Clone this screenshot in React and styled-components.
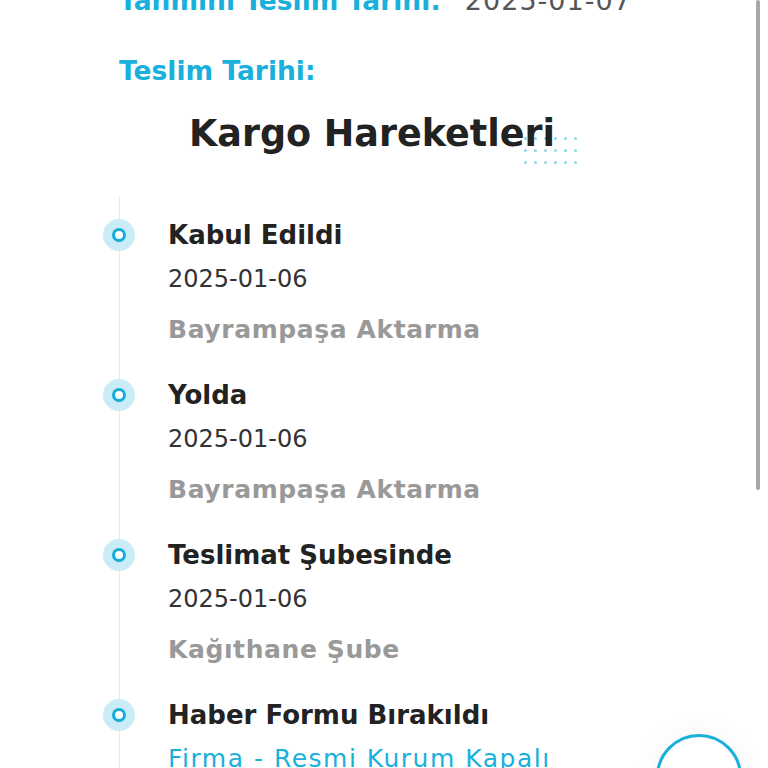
import React from "react";
import styled, { createGlobalStyle } from "styled-components";

const Global = createGlobalStyle`
  html, body {
    margin: 0;
    padding: 0;
    background: #fff;
    overflow: hidden;
  }
  body {
    font-family: "DejaVu Sans", "Noto Sans", sans-serif;
  }
`;

const events = [
  { title: "Kabul Edildi", date: "2025-01-06", place: "Bayrampaşa Aktarma" },
  { title: "Yolda", date: "2025-01-06", place: "Bayrampaşa Aktarma" },
  { title: "Teslimat Şubesinde", date: "2025-01-06", place: "Kağıthane Şube" },
  { title: "Haber Formu Bırakıldı", note: "Firma - Resmi Kurum Kapalı" },
];

function App() {
  return (
    <Page>
      <Global />
      <Info>
        <InfoRow>
          <Label>Tahmini Teslim Tarihi:</Label>
          <Value>2025-01-07</Value>
        </InfoRow>
        <InfoRow>
          <Label>Teslim Tarihi:</Label>
        </InfoRow>
      </Info>
      <TitleWrap>
        <Title>Kargo Hareketleri</Title>
        <Dots>
          {Array.from({ length: 18 }).map((_, i) => (
            <span key={i} />
          ))}
        </Dots>
      </TitleWrap>
      <Timeline>
        {events.map((e, i) => (
          <Item key={i}>
            <Marker>
              <Ring />
            </Marker>
            <Body>
              <ItemTitle>{e.title}</ItemTitle>
              {e.date && <ItemDate>{e.date}</ItemDate>}
              {e.place && <ItemPlace>{e.place}</ItemPlace>}
              {e.note && <ItemNote>{e.note}</ItemNote>}
            </Body>
          </Item>
        ))}
      </Timeline>
      <ScrollBar />
      <FloatButton>
        <svg width="30" height="30" viewBox="0 0 24 24" fill="none" stroke="#666" strokeWidth="2" strokeLinecap="round" strokeLinejoin="round">
          <path d="M9 6l6 6-6 6" />
        </svg>
      </FloatButton>
    </Page>
  );
}

export default App;

const Page = styled.div`
  position: relative;
  width: 768px;
  height: 768px;
  overflow: hidden;
  background: #fff;
`;

const Info = styled.div`
  display: flex;
  flex-direction: column;
  gap: 30px;
  padding-left: 119px;
  margin-top: -19px;
`;

const InfoRow = styled.div`
  display: flex;
  align-items: baseline;
  gap: 24px;
  height: 40px;
  line-height: 40px;
`;

const Label = styled.span`
  color: #19b0dc;
  font-size: 26.5px;
  font-weight: 700;
`;

const Value = styled.span`
  color: #555;
  font-size: 27px;
  font-weight: 400;
  letter-spacing: 1px;
`;

const TitleWrap = styled.div`
  position: relative;
  width: max-content;
  margin: 20px auto 0;
  padding-right: 24px;
`;

const Title = styled.h2`
  position: relative;
  z-index: 1;
  margin: 0;
  color: #222;
  font-size: 36.5px;
  font-weight: 700;
  line-height: 46px;
`;

const Dots = styled.div`
  position: absolute;
  right: 2px;
  top: 26px;
  display: grid;
  grid-template-columns: repeat(6, 3px);
  gap: 9px 7px;
  span {
    width: 3px;
    height: 3px;
    border-radius: 50%;
    background: #8fd6ea;
  }
`;

const Timeline = styled.div`
  position: relative;
  margin: 54px 0 0 103px;
  padding-top: 4px;
  &::before {
    content: "";
    position: absolute;
    left: 16px;
    top: -14px;
    bottom: -200px;
    width: 1px;
    background: #e8e8e8;
  }
`;

const Item = styled.div`
  display: flex;
  gap: 33px;
  height: 160px;
`;

const Marker = styled.div`
  position: relative;
  z-index: 1;
  flex: none;
  width: 32px;
  height: 32px;
  margin-top: 4px;
  border-radius: 50%;
  background: #c9ecf7;
  display: flex;
  align-items: center;
  justify-content: center;
`;

const Ring = styled.div`
  width: 8px;
  height: 8px;
  border-radius: 50%;
  border: 3px solid #14addb;
  background: #fff;
`;

const Body = styled.div`
  display: flex;
  flex-direction: column;
`;

const ItemTitle = styled.div`
  color: #222;
  font-size: 26px;
  font-weight: 700;
  line-height: 40px;
`;

const ItemDate = styled.div`
  color: #333;
  font-size: 24px;
  font-weight: 400;
  line-height: 48px;
`;

const ItemPlace = styled.div`
  color: #999;
  font-size: 25px;
  font-weight: 700;
  line-height: 54px;
  letter-spacing: 0.6px;
`;

const ItemNote = styled.div`
  color: #19b0dc;
  font-size: 25px;
  font-weight: 400;
  line-height: 48px;
  letter-spacing: 1.5px;
`;

const ScrollBar = styled.div`
  position: absolute;
  right: 8px;
  top: 0;
  width: 4px;
  height: 490px;
  border-radius: 2px;
  background: #a8a8a8;
`;

const FloatButton = styled.div`
  position: absolute;
  left: 656px;
  top: 734px;
  width: 86px;
  height: 86px;
  border-radius: 50%;
  border: 3px solid #19b0dc;
  background: #fff;
  box-shadow: 0 0 30px rgba(0, 0, 0, 0.05);
  display: flex;
  align-items: flex-start;
  justify-content: center;
  padding-top: 20px;
  box-sizing: border-box;
  transform: rotate(-90deg);
`;
